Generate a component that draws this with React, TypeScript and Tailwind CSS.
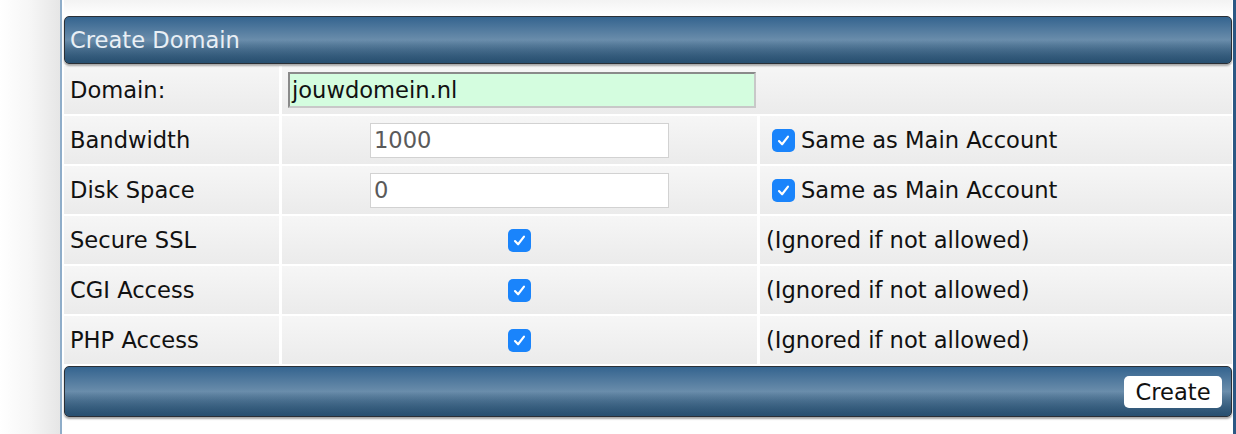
import React from "react";

const font = { fontFamily: '"DejaVu Sans", Verdana, sans-serif' };

function Check() {
  return (
    <span className="inline-flex h-[23px] w-[23px] items-center justify-center rounded-[5px] bg-[#1a84fb]">
      <svg width="15" height="15" viewBox="0 0 16 16" fill="none">
        <path d="M3.2 8.6 L6.5 12 L12.8 3.8" stroke="white" strokeWidth="2.3" strokeLinecap="round" strokeLinejoin="round" />
      </svg>
    </span>
  );
}

const cell = "bg-gradient-to-b from-[#f6f6f6] to-[#ebebeb] h-[48px] flex items-center";

function Bar({ children }: { children?: React.ReactNode }) {
  return (
    <div className="relative rounded-[5px] border border-[#2a2f36] bg-gradient-to-b from-[#34648f] via-[#6a8dab] to-[#2c5779] shadow-[0_2px_2px_rgba(0,0,0,0.35)]">
      <div className="absolute inset-0 rounded-[5px] bg-gradient-to-b from-transparent via-transparent to-[#254a6a] opacity-60" />
      <div className="relative">{children}</div>
    </div>
  );
}

export default function App() {
  const rows2 = [
    { label: "Bandwidth", value: "1000" },
    { label: "Disk Space", value: "0" },
  ];
  const rows3 = ["Secure SSL", "CGI Access", "PHP Access"];
  return (
    <div className="flex h-[434px] w-[1236px] overflow-hidden bg-white text-[22.6px] text-[#111]" style={font}>
      <div className="w-[60px] bg-gradient-to-r from-white via-[#f6f6f6] to-[#e6e6e6]" />
      <div className="w-[2px] bg-[#8fadc9]" />
      <div className="flex flex-1 flex-col pl-[2px] pr-[1px]">
        <div className="h-[16px] bg-gradient-to-b from-[#f3f3f3] to-white" />
        <Bar>
          <div className="flex h-[46px] items-center pl-[5px] pt-[2px] text-[#e9eff5]">Create Domain</div>
        </Bar>
        <div className="mt-[2px] grid grid-cols-[215px_475px_1fr] gap-x-[3px] gap-y-[2px]">
          <div className={`${cell} pl-[6px] pt-[2px]`}>Domain:</div>
          <div className={`${cell} col-span-2 pl-[6px]`}>
            <div className="flex h-[36px] w-[468px] items-center border-2 border-t-[#8a8a8a] border-l-[#8a8a8a] border-r-[#c8c8c8] border-b-[#c8c8c8] bg-[#d4fddf] pl-[2px] pt-[2px] text-[#111]">
              jouwdomein.nl
            </div>
          </div>
          {rows2.map((r) => (
            <React.Fragment key={r.label}>
              <div className={`${cell} pl-[6px] pt-[2px]`}>{r.label}</div>
              <div className={`${cell} justify-center`}>
                <div className="flex h-[35px] w-[299px] items-center border border-[#d2d2d2] bg-white pl-[3px] pt-[2px] text-[#5a5a5a]">
                  {r.value}
                </div>
              </div>
              <div className={`${cell} gap-[6px] pl-[12px]`}>
                <Check />
                <span className="pt-[2px]">Same as Main Account</span>
              </div>
            </React.Fragment>
          ))}
          {rows3.map((l) => (
            <React.Fragment key={l}>
              <div className={`${cell} pl-[6px] pt-[2px]`}>{l}</div>
              <div className={`${cell} justify-center`}>
                <Check />
              </div>
              <div className={`${cell} pl-[6px] pt-[2px]`}>(Ignored if not allowed)</div>
            </React.Fragment>
          ))}
        </div>
        <div className="mt-[2px]">
          <Bar>
            <div className="flex h-[49px] items-center justify-end pr-[9px]">
              <button className="flex h-[32px] w-[98px] items-center justify-center rounded-[5px] bg-white pt-[2px] text-[22.6px] text-[#111]">
                Create
              </button>
            </div>
          </Bar>
        </div>
      </div>
      <div className="w-[3px] bg-[#2b5884]" />
    </div>
  );
}
